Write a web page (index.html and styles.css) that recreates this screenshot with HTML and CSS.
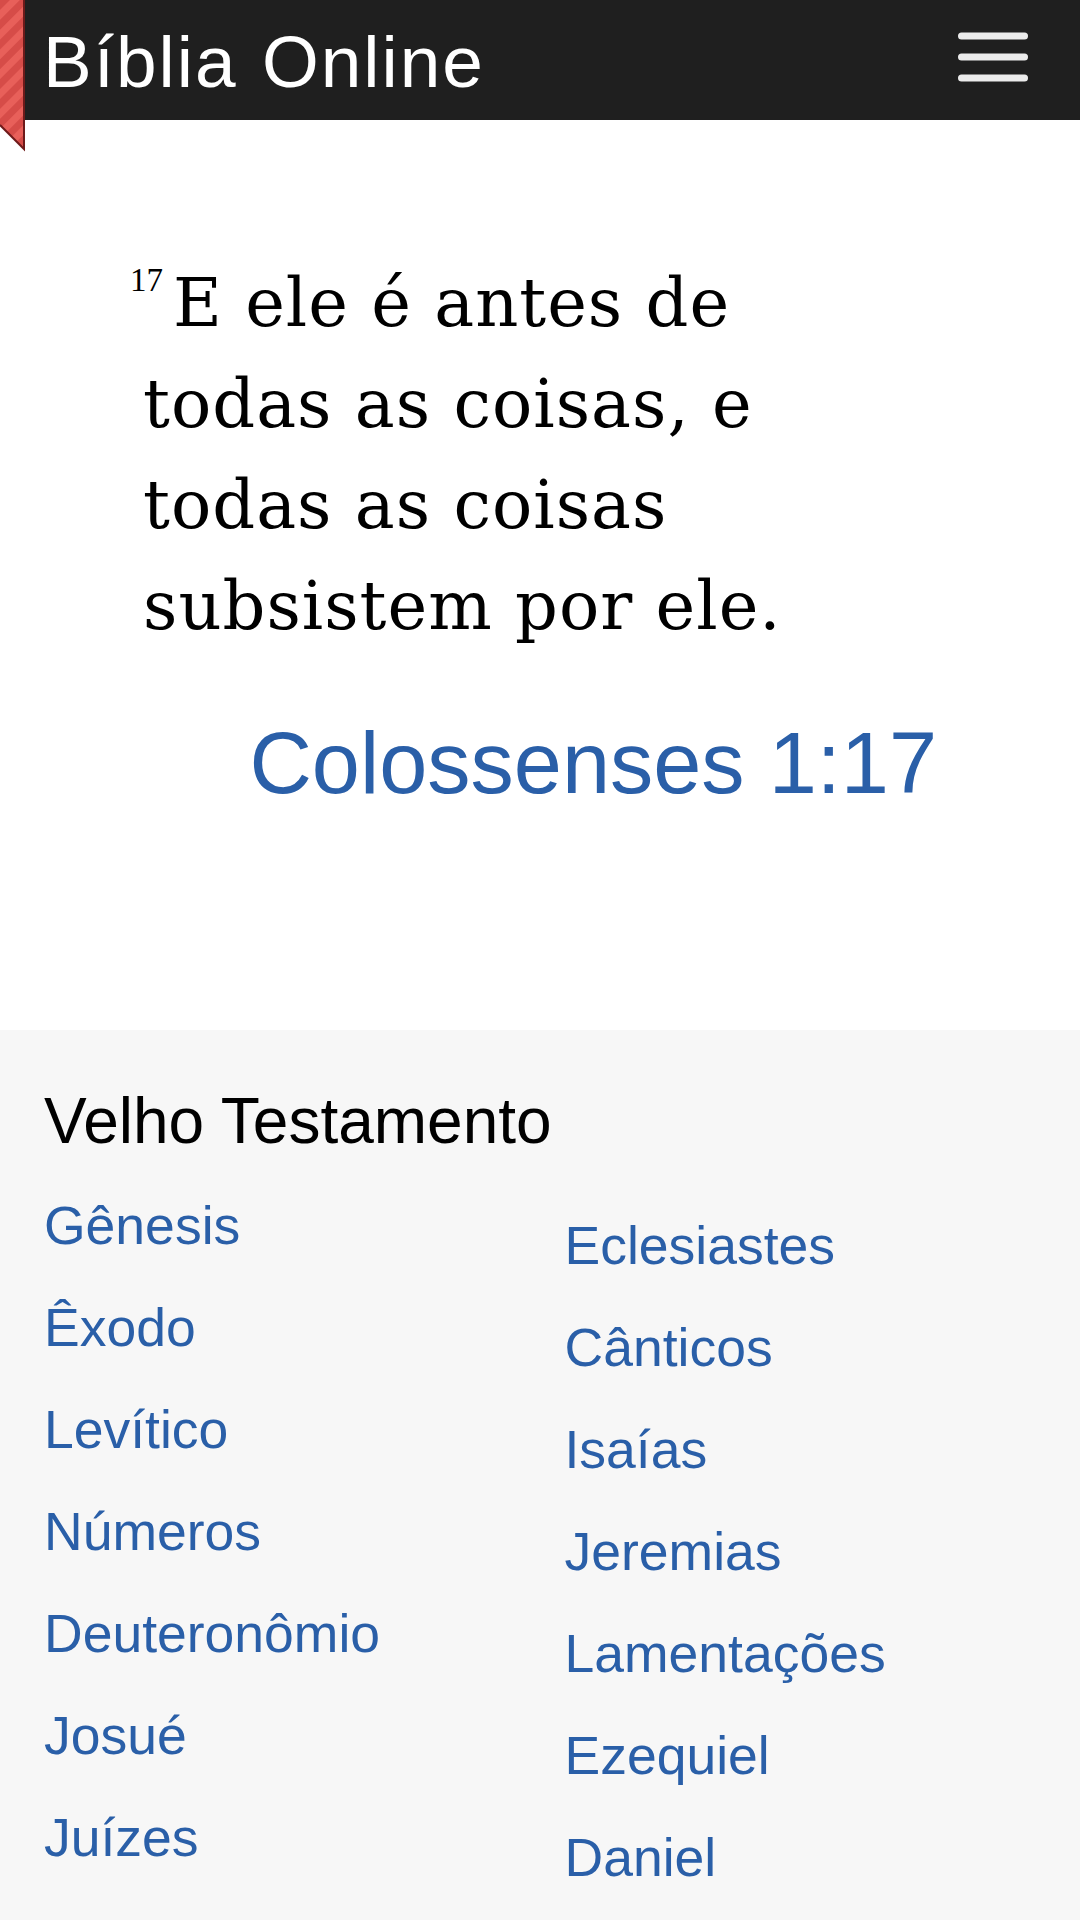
FILE: index.html
```html
<!DOCTYPE html>
<html lang="pt">
<head>
    <meta charset="UTF-8">
    <title>Bíblia Online</title>
    <link rel="stylesheet" href="styles.css">
</head>
<body>
    <svg class="ribbon" width="26" height="152" viewBox="0 0 26 152">
        <defs>
            <pattern id="stripes" width="14" height="14" patternUnits="userSpaceOnUse" patternTransform="rotate(45)">
                <rect width="14" height="14" fill="#e8605a"/>
                <rect width="7" height="14" fill="#d64c48"/>
            </pattern>
        </defs>
        <polygon points="0,0 24,0 24,149 0,125" fill="url(#stripes)"/>
        <polyline points="24,0 24,149 0,125" fill="none" stroke="#6e1a1a" stroke-width="2"/>
    </svg>

    <header class="topbar">
        <a class="brand" href="#">Bíblia Online</a>
        <button class="menu-btn" aria-label="menu">
            <svg width="70" height="50" viewBox="0 0 70 50">
                <line x1="3.5" y1="4" x2="66.5" y2="4"/>
                <line x1="3.5" y1="25" x2="66.5" y2="25"/>
                <line x1="3.5" y1="46" x2="66.5" y2="46"/>
            </svg>
        </button>
    </header>

    <section class="daily">
        <p class="verse"><sup>17</sup>E ele é antes de todas as coisas, e todas as coisas subsistem por ele.</p>
        <a class="verse-ref" href="#">Colossenses 1:17</a>
    </section>

    <section class="books">
        <h2>Velho Testamento</h2>
        <div class="book-cols">
            <ul class="book-list">
                <li><a href="#">Gênesis</a></li>
                <li><a href="#">Êxodo</a></li>
                <li><a href="#">Levítico</a></li>
                <li><a href="#">Números</a></li>
                <li><a href="#">Deuteronômio</a></li>
                <li><a href="#">Josué</a></li>
                <li><a href="#">Juízes</a></li>
                <li><a href="#">Rute</a></li>
                <li><a href="#">1 Samuel</a></li>
                <li><a href="#">2 Samuel</a></li>
                <li><a href="#">1 Reis</a></li>
                <li><a href="#">2 Reis</a></li>
                <li><a href="#">1 Crônicas</a></li>
                <li><a href="#">2 Crônicas</a></li>
                <li><a href="#">Esdras</a></li>
                <li><a href="#">Neemias</a></li>
                <li><a href="#">Ester</a></li>
                <li><a href="#">Jó</a></li>
                <li><a href="#">Salmos</a></li>
                <li><a href="#">Provérbios</a></li>
            </ul>
            <ul class="book-list second">
                <li><a href="#">Eclesiastes</a></li>
                <li><a href="#">Cânticos</a></li>
                <li><a href="#">Isaías</a></li>
                <li><a href="#">Jeremias</a></li>
                <li><a href="#">Lamentações</a></li>
                <li><a href="#">Ezequiel</a></li>
                <li><a href="#">Daniel</a></li>
                <li><a href="#">Oséias</a></li>
                <li><a href="#">Joel</a></li>
                <li><a href="#">Amós</a></li>
                <li><a href="#">Obadias</a></li>
                <li><a href="#">Jonas</a></li>
                <li><a href="#">Miquéias</a></li>
                <li><a href="#">Naum</a></li>
                <li><a href="#">Habacuque</a></li>
                <li><a href="#">Sofonias</a></li>
                <li><a href="#">Ageu</a></li>
                <li><a href="#">Zacarias</a></li>
                <li><a href="#">Malaquias</a></li>
            </ul>
        </div>
    </section>
</body>
</html>
```

FILE: styles.css
```css
*{
    margin: 0px;
    padding: 0px;
    box-sizing: border-box;
}
body{
    font-family: "Liberation Sans", Arial, sans-serif;
    background-color: #ffffff;
    color: #000000;
}
a{
    text-decoration: none;
}

/* marcador vermelho no canto */
.ribbon{
    position: absolute;
    left: 0px;
    top: 0px;
    z-index: 2;
}

.topbar{
    height: 120px;
    background-color: #1f1f1f;
    display: flex;
    align-items: flex-start;
    padding-left: 43px;
    padding-right: 52px;
}
.brand{
    color: #ffffff;
    font-size: 73px;
    line-height: 116px;
    padding-top: 4px;
    letter-spacing: 2px;
    word-spacing: 2px;
}
.menu-btn{
    margin-left: auto;
    margin-top: 32px;
    background: none;
    border: none;
    display: block;
}
.menu-btn svg{
    display: block;
}
.menu-btn line{
    stroke: #ebebeb;
    stroke-width: 7;
    stroke-linecap: round;
}

/* versiculo do dia */
.daily{
    padding: 133px 143px 224px 143px;
}
.verse{
    font-family: "DejaVu Serif", "Liberation Serif", serif;
    font-size: 67px;
    line-height: 101px;
    letter-spacing: 1px;
    text-indent: -13px;
}
.verse sup{
    font-family: "Liberation Serif", serif;
    font-size: 33px;
    line-height: 0;
    vertical-align: 35px;
    letter-spacing: 0px;
    margin-right: 10px;
}
.verse-ref{
    display: block;
    margin-top: 63px;
    text-align: right;
    font-size: 86.5px;
    line-height: 86px;
    color: #2a5fa8;
}

/* lista de livros */
.books{
    background-color: #f7f7f7;
    padding: 60px 45px 40px 44px;
}
.books h2{
    font-weight: normal;
    font-size: 64px;
    line-height: 63px;
}
.book-cols{
    display: grid;
    grid-template-columns: 1fr 1fr;
    column-gap: 50px;
    margin-top: 22px;
}
.book-list{
    list-style: none;
}
.book-list.second{
    padding-top: 20px;
}
.book-list li{
    font-size: 53.5px;
    line-height: 102px;
}
.book-list a{
    color: #2a5fa8;
}
```
